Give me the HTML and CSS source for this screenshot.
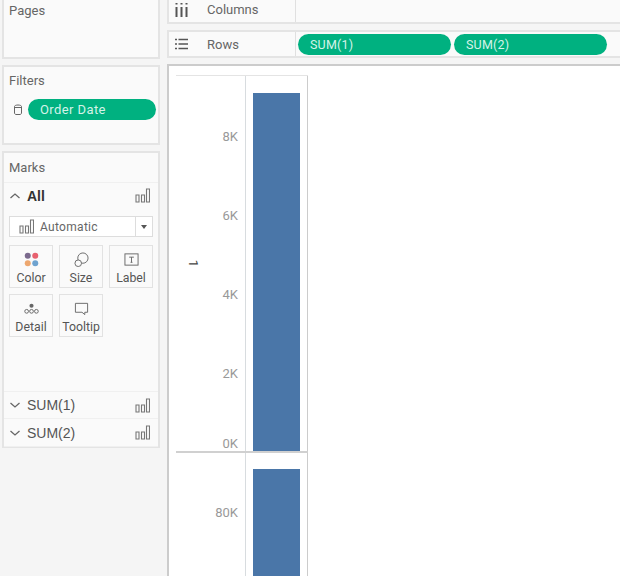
FILE: index.html
```html
<!DOCTYPE html>
<html lang="en">
<head>
    <meta charset="UTF-8">
    <meta name="viewport" content="width=device-width, initial-scale=1.0">
    <title>Sheet</title>
    <link rel="stylesheet" href="styles.css">
</head>
<body>
    <svg class="defs" width="0" height="0">
        <symbol id="bars" viewBox="0 0 15 15">
            <path d="M1 7h3v7h-3zM6.500 7h3v7h-3zM11.500 1h3v13h-3z" fill="none" stroke="currentColor" stroke-width="1.100"/>
        </symbol>
    </svg>

    <aside class="side">
        <section class="card pages">
            <h3>Pages</h3>
        </section>

        <section class="card filters">
            <h3>Filters</h3>
            <div class="filter-row">
                <svg class="cyl" width="10" height="11" viewBox="0 0 10 11"><path d="M1.500 2.500c0-2 7-2 7 0v6.500c0 1-1 1.500-1.500 1.500h-4c-.5 0-1.500-.5-1.500-1.500zM1.500 3.500h7" fill="none" stroke="#666" stroke-width="1"/></svg>
                <div class="pill filter-pill">Order Date</div>
            </div>
        </section>

        <section class="card marks">
            <h3 class="marks-title">Marks</h3>
            <div class="mark-row all">
                <svg class="chev" width="12" height="8" viewBox="0 0 12 8"><path d="M1.500 6l4.500-4 4.500 4" fill="none" stroke="#666" stroke-width="1.300"/></svg>
                <span class="mark-name">All</span>
                <svg class="bars"><use href="#bars"/></svg>
            </div>
            <div class="mark-type">
                <svg class="bars"><use href="#bars"/></svg>
                <span class="type-name">Automatic</span>
                <span class="caret"></span>
            </div>
            <div class="tiles">
                <div class="tile">
                    <svg width="15" height="15" viewBox="0 0 16 16"><circle cx="4" cy="4" r="3.200" fill="#7b6a8d"/><circle cx="12" cy="4" r="3.200" fill="#e8616f"/><circle cx="4" cy="12" r="3.200" fill="#eda76f"/><circle cx="12" cy="12" r="3.200" fill="#6fa3cf"/></svg>
                    <span>Color</span>
                </div>
                <div class="tile">
                    <svg width="15" height="15" viewBox="0 0 16 16"><circle cx="9.500" cy="6.500" r="5.500" fill="none" stroke="#666" stroke-width="1"/><circle cx="4.500" cy="12" r="3.500" fill="#fafafa" stroke="#666" stroke-width="1"/></svg>
                    <span>Size</span>
                </div>
                <div class="tile">
                    <svg width="15" height="15" viewBox="0 0 16 16"><rect x="1" y="2" width="14" height="12" fill="none" stroke="#666" stroke-width="1"/><path d="M5.500 5.500h5M8 5.500v5.500M7 11h2" fill="none" stroke="#666" stroke-width="1"/></svg>
                    <span>Label</span>
                </div>
                <div class="tile">
                    <svg width="15" height="15" viewBox="0 0 16 16"><circle cx="8" cy="5" r="2.200" fill="#666"/><circle cx="2.800" cy="11" r="2" fill="none" stroke="#666"/><circle cx="8" cy="11" r="2" fill="none" stroke="#666"/><circle cx="13.200" cy="11" r="2" fill="none" stroke="#666"/></svg>
                    <span>Detail</span>
                </div>
                <div class="tile">
                    <svg width="15" height="15" viewBox="0 0 16 16"><path d="M1.500 2.500h13v9.500h-3v2.500l-3-2.500h-7z" fill="none" stroke="#666" stroke-width="1"/></svg>
                    <span>Tooltip</span>
                </div>
            </div>
            <div class="mark-row sum first">
                <svg class="chev" width="12" height="8" viewBox="0 0 12 8"><path d="M1.500 2l4.500 4 4.500-4" fill="none" stroke="#666" stroke-width="1.300"/></svg>
                <span class="sum-name">SUM(1)</span>
                <svg class="bars"><use href="#bars"/></svg>
            </div>
            <div class="mark-row sum">
                <svg class="chev" width="12" height="8" viewBox="0 0 12 8"><path d="M1.500 2l4.500 4 4.500-4" fill="none" stroke="#666" stroke-width="1.300"/></svg>
                <span class="sum-name">SUM(2)</span>
                <svg class="bars"><use href="#bars"/></svg>
            </div>
        </section>
    </aside>

    <main class="main">
        <div class="card shelf columns">
            <div class="shelf-head">
                <svg width="13" height="14" viewBox="0 0 13 14"><path d="M1.500 0v1.500M6.500 0v1.500M11.500 0v1.500M1.500 4v10M6.500 4v10M11.500 4v10" fill="none" stroke="#555" stroke-width="2"/></svg>
                <span>Columns</span>
            </div>
        </div>
        <div class="card shelf rows">
            <div class="shelf-head">
                <svg width="13" height="12" viewBox="0 0 13 12"><path d="M0 1.500h2M3.500 1.500h9.500M0 6h2M3.500 6h9.500M0 10.500h2M3.500 10.500h9.500" fill="none" stroke="#555" stroke-width="1.500"/></svg>
                <span>Rows</span>
            </div>
            <div class="pill shelf-pill">SUM(1)</div>
            <div class="pill shelf-pill">SUM(2)</div>
        </div>

        <div class="view">
            <div class="chart">
                <div class="pane pane-one">
                    <div class="title-col"><span class="axis-title">1</span></div>
                    <div class="axis">
                        <div class="tick">8K</div>
                        <div class="tick">6K</div>
                        <div class="tick">4K</div>
                        <div class="tick">2K</div>
                        <div class="tick tick-zero">0K</div>
                    </div>
                    <div class="plot"><div class="bar"></div></div>
                </div>
                <div class="pane pane-two">
                    <div class="title-col"></div>
                    <div class="axis">
                        <div class="tick">80K</div>
                    </div>
                    <div class="plot"><div class="bar"></div></div>
                </div>
            </div>
        </div>
    </main>
</body>
</html>
```

FILE: styles.css
```css
html, body {
    margin: 0;
    padding: 0;
    height: 576px;
    overflow: hidden;
}

body {
    display: flex;
    gap: 7px;
    padding-left: 2px;
    background-color: #f5f5f5;
    font-family: Roboto, "Liberation Sans", sans-serif;
    color: #555;
    box-sizing: border-box;
}

.defs {
    position: absolute;
}

.side {
    width: 158px;
    flex-shrink: 0;
    display: flex;
    flex-direction: column;
    gap: 6px;
}

.card {
    background-color: #fafafa;
    border: 2px solid #e4e4e4;
    box-sizing: border-box;
}

h3 {
    margin: 0;
    font-size: 13px;
    font-weight: 400;
    line-height: 16px;
    color: #666;
}

.pages {
    height: 59px;
    border-top: none;
    padding: 3px 0 0 5px;
}

.filters {
    height: 80px;
    padding: 6px 0 0 5px;
}

.filter-row {
    display: flex;
    align-items: center;
    gap: 5px;
    margin-top: 10px;
    padding-left: 4px;
}

.pill {
    background-color: #00b180;
    color: #d4f3e8;
    border-radius: 11px;
    box-sizing: border-box;
    height: 21px;
    line-height: 21px;
    font-size: 13px;
    letter-spacing: 0.4px;
}

.filter-pill {
    width: 128px;
    padding-left: 12px;
}

.marks {
    height: 297px;
    display: flex;
    flex-direction: column;
    border-bottom-width: 1px;
}

.marks-title {
    padding: 7px 0 6px 5px;
    border-bottom: 1px solid #f0f0f0;
}

.mark-row {
    display: flex;
    align-items: center;
    height: 28px;
    padding: 0 8px 0 5px;
    box-sizing: border-box;
    border-bottom: 1px solid #f0f0f0;
}

.all {
    height: 27px;
    padding-bottom: 2px;
    border-bottom: none;
}

.chev {
    flex-shrink: 0;
}

.mark-name {
    margin-left: 6px;
    flex-grow: 1;
    font-size: 14px;
    font-weight: 700;
    font-family: "Liberation Sans", sans-serif;
    color: #333;
}

.sum-name {
    margin-left: 6px;
    flex-grow: 1;
    font-size: 14px;
    font-family: "Liberation Sans", sans-serif;
    color: #555;
}

.bars {
    width: 15px;
    height: 15px;
    color: #777;
}

.mark-type {
    display: flex;
    align-items: center;
    margin: 6px 5px 0 5px;
    height: 21px;
    border: 1px solid #ddd;
    background-color: #fff;
    box-sizing: border-box;
    padding-left: 9px;
    font-size: 12px;
    letter-spacing: 0.3px;
}

.type-name {
    margin-left: 6px;
    flex-grow: 1;
    color: #666;
}

.caret {
    width: 17px;
    height: 100%;
    border-left: 1px solid #ddd;
    box-sizing: border-box;
    display: flex;
    align-items: center;
    justify-content: center;
}

.caret::after {
    content: "";
    border-top: 4px solid #555;
    border-left: 3px solid transparent;
    border-right: 3px solid transparent;
}

.tiles {
    display: grid;
    grid-template-columns: repeat(3, 44px);
    grid-auto-rows: 43px;
    gap: 6px;
    margin: 8px 0 0 5px;
    flex-grow: 1;
}

.tile {
    display: flex;
    flex-direction: column;
    align-items: center;
    gap: 4px;
    padding-top: 6px;
    border: 1px solid #e2e2e2;
    box-sizing: border-box;
    background-color: #fafafa;
    font-size: 12.300px;
    line-height: 14px;
    color: #555;
}

.tile svg {
    flex-shrink: 0;
}

.first {
    border-top: 1px solid #f0f0f0;
}

.main {
    flex-grow: 1;
    display: flex;
    flex-direction: column;
    min-width: 0;
}

.shelf {
    display: flex;
    align-items: center;
    border-right: none;
}

.columns {
    height: 24px;
    border-top: none;
    margin-bottom: 6px;
}

.columns .shelf-head {
    padding-bottom: 2px;
}

.rows {
    height: 29px;
    margin-bottom: 6px;
}

.shelf-head {
    width: 127px;
    height: 100%;
    flex-shrink: 0;
    display: flex;
    align-items: center;
    gap: 19px;
    padding-left: 6px;
    box-sizing: border-box;
    border-right: 1px solid #e0e0e0;
    font-size: 13px;
    color: #666;
}

.shelf-pill {
    width: 153px;
    margin-left: 2px;
    padding-left: 12px;
    font-size: 12.500px;
    letter-spacing: 0.2px;
}

.shelf-pill + .shelf-pill {
    margin-left: 3px;
}

.view {
    flex-grow: 1;
    background-color: #fff;
    border-left: 2px solid #ccc;
    border-top: 2px solid #ccc;
    padding: 9px 0 0 7px;
    overflow: hidden;
}

.chart {
    width: 132px;
    border-top: 1px solid #e4e4e4;
}

.pane {
    display: flex;
}

.pane-one {
    height: 375px;
    border-bottom: 2px solid #d0d0d0;
}

.pane-two {
    height: 130px;
}

.title-col {
    width: 20px;
    flex-shrink: 0;
    display: flex;
    align-items: center;
}

.axis-title {
    transform: rotate(90deg);
    font-size: 13px;
    color: #444;
    margin-left: 14px;
}

.axis {
    width: 49px;
    flex-shrink: 0;
    padding: 51px 7px 0 0;
    box-sizing: border-box;
    text-align: right;
    font-size: 13px;
    color: #999;
}

.pane-two .axis {
    padding-top: 50px;
}

.tick {
    height: 79px;
    line-height: 20px;
}

.tick-zero {
    margin-top: -9px;
}

.plot {
    flex-grow: 1;
    border-left: 1px solid #d8dcdf;
    border-right: 1px solid #ccc;
    padding: 17px 7px 0 7px;
}

.pane-two .plot {
    padding-top: 16px;
}

.bar {
    height: 100%;
    background-color: #4a76a8;
}
```
